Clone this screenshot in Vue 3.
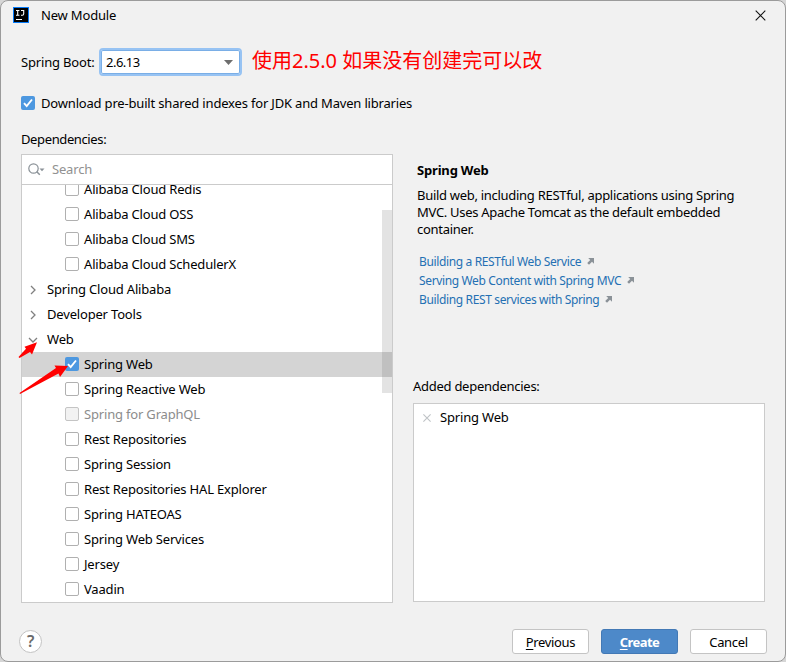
<script setup>
const rows = [
  { label: 'Alibaba Cloud Redis' },
  { label: 'Alibaba Cloud OSS' },
  { label: 'Alibaba Cloud SMS' },
  { label: 'Alibaba Cloud SchedulerX' },
  { label: 'Spring Cloud Alibaba', group: 'closed' },
  { label: 'Developer Tools', group: 'closed' },
  { label: 'Web', group: 'open' },
  { label: 'Spring Web', checked: true },
  { label: 'Spring Reactive Web' },
  { label: 'Spring for GraphQL', disabled: true },
  { label: 'Rest Repositories' },
  { label: 'Spring Session' },
  { label: 'Rest Repositories HAL Explorer' },
  { label: 'Spring HATEOAS' },
  { label: 'Spring Web Services' },
  { label: 'Jersey' },
  { label: 'Vaadin' },
]
const links = [
  'Building a RESTful Web Service',
  'Serving Web Content with Spring MVC',
  'Building REST services with Spring',
]
</script>

<template>
  <div class="backdrop">
    <div class="window">
      <header class="titlebar">
        <svg class="logo" width="16" height="16" viewBox="0 0 16 16">
          <rect width="16" height="16" fill="#087cfa" />
          <rect x="1" y="1" width="14" height="14" fill="#000" />
          <path d="M3 3.5h3.4M4.7 3.5v4.6M3 8.2h3.4M8 3.5h2.7v3.2q0 1.5-1.4 1.5H8M3 12.5h6" fill="none" stroke="#fff" stroke-width="1.1" />
        </svg>
        <span class="title">New Module</span>
        <svg class="close" width="11" height="11" viewBox="0 0 11 11">
          <path d="M.7.7l9.6 9.6M10.3.7L.7 10.3" stroke="#111" stroke-width="1.1" />
        </svg>
      </header>

      <div class="version">
        <label>Spring Boot:</label>
        <div class="combo">
          <span>2.6.13</span>
          <svg width="9" height="5" viewBox="0 0 9 5"><path d="M0 0h9L4.5 5z" fill="#6e6e6e" /></svg>
        </div>
        <span class="note">使用2.5.0 如果没有创建完可以改</span>
      </div>

      <div class="download">
        <i class="box checked"><svg width="14" height="14" viewBox="0 0 14 14"><path d="M3 7.2l2.7 2.9L11 3.5" /></svg></i>
        <span>Download pre-built shared indexes for JDK and Maven libraries</span>
      </div>

      <main class="columns">
        <section class="left">
          <div class="heading">Dependencies:</div>
          <div class="panel">
            <div class="search">
              <svg width="17" height="14" viewBox="0 0 17 14">
                <circle cx="5.5" cy="5.5" r="4.7" fill="none" stroke="#8b9298" stroke-width="1.2" />
                <path d="M8.8 8.8l3 3" stroke="#8b9298" stroke-width="1.5" />
                <path d="M11.5 5.5h5L14 8.3z" fill="#8b9298" />
              </svg>
              <span>Search</span>
            </div>
            <div class="viewport">
              <div
                v-for="row in rows"
                :key="row.label"
                class="row"
                :class="{ group: row.group, selected: row.checked, disabled: row.disabled }"
              >
                <svg v-if="row.group" class="chevron" width="10" height="10" viewBox="0 0 10 10">
                  <path :d="row.group === 'open' ? 'M1 3l4 4 4-4' : 'M3 1l4 4-4 4'" />
                </svg>
                <i v-else class="box" :class="{ checked: row.checked }">
                  <svg v-if="row.checked" width="14" height="14" viewBox="0 0 14 14"><path d="M3 7.2l2.7 2.9L11 3.5" /></svg>
                </i>
                <span>{{ row.label }}</span>
              </div>
              <div class="thumb"></div>
            </div>
          </div>
        </section>

        <section class="right">
          <div class="details">
            <h2>Spring Web</h2>
            <p>Build web, including RESTful, applications using Spring<br>MVC. Uses Apache Tomcat as the default embedded<br>container.</p>
            <ul>
              <li v-for="link in links" :key="link">
                <a>{{ link }}</a>
                <svg width="7" height="7" viewBox="0 0 7 7"><path d="M1.2 0H7v5.8L5 3.8 2 6.8.2 5l3-3z" fill="#8b9298" /></svg>
              </li>
            </ul>
          </div>
          <div class="heading added">Added dependencies:</div>
          <div class="panel chosen">
            <div class="item">
              <svg width="8" height="8" viewBox="0 0 8 8"><path d="M.4.4l7.2 7.2M7.6.4L.4 7.6" stroke="#bfc3c6" stroke-width="1.1" /></svg>
              <span>Spring Web</span>
            </div>
          </div>
        </section>
      </main>

      <footer>
        <div class="help">?</div>
        <div class="actions">
          <button><span><u>P</u>revious</span></button>
          <button class="primary"><span><u>C</u>reate</span></button>
          <button><span>Cancel</span></button>
        </div>
      </footer>

      <svg class="arrows" width="60" height="60" viewBox="0 0 60 60">
        <path d="M0.500 17L8 8.800 6.500 6.800 19 2.300 14 14.500 12 12 1.500 18z" />
        <path d="M1.500 53L38 28 36.500 25.500 50 26 42 37 40.500 33.500 2 54z" />
      </svg>
    </div>
  </div>
</template>

<style>
body { margin: 0; }
</style>

<style scoped>
* { box-sizing: border-box; }
.backdrop { width: 786px; height: 662px; background: #d6d6d6; }
.window {
  position: relative; width: 786px; height: 662px; overflow: hidden;
  display: flex; flex-direction: column;
  background: #f1f1f1; border: 1px solid #9b9b9b; border-radius: 8px;
  font: 13px/17px "Noto Sans", "Noto Sans CJK SC", sans-serif; color: #000;
  letter-spacing: -0.18px;
  white-space: nowrap;
}
svg { display: block; flex: none; }
.titlebar { display: flex; align-items: center; height: 28px; padding: 0 19px 0 12px; }
.title { margin-left: 12px; }
.close { margin-left: auto; }
.version { display: flex; align-items: center; height: 28px; margin-top: 19px; padding-left: 20px; }
.version label { width: 78px; }
.combo {
  display: flex; align-items: center; justify-content: space-between;
  width: 143px; height: 28px; padding: 0 7px 0 5px; letter-spacing: -0.5px;
  background: #fff; border: 2px solid #97c3f3; border-radius: 4px;
  box-shadow: inset 0 0 0 1px #7aaee6;
}
.note {
  margin: -3px 0 0 10px; color: #f00; letter-spacing: 0;
  font: 20px/26px "Noto Sans", "Noto Sans CJK SC", sans-serif;
}
.download { display: flex; align-items: center; gap: 6px; height: 18px; margin-top: 18px; padding-left: 20px; }
.box {
  flex: none; width: 14px; height: 14px;
  background: #fff; border: 1px solid #b0b0b0; border-radius: 2px;
}
.box.checked { background: #4d98e0; border: 0; }
.box path { fill: none; stroke: #fff; stroke-width: 1.9; }
.columns { display: flex; gap: 20px; margin: 19px 20px 0; }
.left { width: 372px; }
.heading { height: 17px; letter-spacing: -0.38px; }
.heading.added { letter-spacing: -0.27px; }
.panel { background: #fff; border: 1px solid #cbcbcb; }
.left .panel { height: 449px; margin-top: 6px; }
.search {
  display: flex; align-items: center; gap: 7px; height: 30px; padding-left: 6px;
  color: #919191; border-bottom: 1px solid #cbcbcb;
}
.viewport { position: relative; height: 417px; overflow: hidden; }
.row { display: flex; align-items: center; gap: 5px; height: 25px; padding-left: 43px; }
.row:first-child { margin-top: -8px; }
.row.group { gap: 9px; padding-left: 6px; }
.row.selected { background: #d4d4d4; }
.row.disabled { color: #8c8c8c; }
.row.disabled .box { background: #f2f2f2; border-color: #c4c4c4; }
.row .box { margin-top: -1px; }
.chevron path { fill: none; stroke: #808080; stroke-width: 1.3; }
.thumb { position: absolute; top: 25px; right: 0; width: 10px; height: 183px; background: rgba(115, 115, 115, 0.2); }
.right { width: 352px; }
.details { height: 247px; padding: 31px 0 0 4px; }
h2 { margin: 0; font-size: 13px; line-height: 17px; font-weight: 700; }
p { margin: 8px 0 0; letter-spacing: -0.29px; }
ul { margin: 14px 0 0; padding: 0 0 0 2px; list-style: none; }
li { display: flex; align-items: center; gap: 6px; height: 19px; font-size: 12px; letter-spacing: -0.36px; color: #2470b3; }
.chosen { height: 199px; margin-top: 8px; }
.item { display: flex; align-items: center; gap: 9px; height: 27px; padding-left: 9px; }
footer { display: flex; align-items: center; justify-content: space-between; height: 26px; margin-top: 25px; padding: 0 18px; }
.help {
  width: 23px; height: 23px; border: 1px solid #c2c2c2; border-radius: 50%;
  background: #fff; color: #6a6a6a; text-align: center; font-size: 16px; line-height: 21px; font-weight: 600;
}
.actions { display: flex; gap: 12px; }
button {
  width: 77px; height: 25px; padding: 0; font: inherit; letter-spacing: -0.35px; color: #000;
  background: #fff; border: 1px solid #c4c4c4; border-radius: 3px;
}
button span { position: relative; top: 1px; }
.primary { color: #fff; font-weight: 700; letter-spacing: -0.6px; background: #4d89c9; border-color: #4379b5; }
u { text-underline-offset: 2px; }
.arrows { position: absolute; left: 17px; top: 339px; fill: #f00; }
</style>
